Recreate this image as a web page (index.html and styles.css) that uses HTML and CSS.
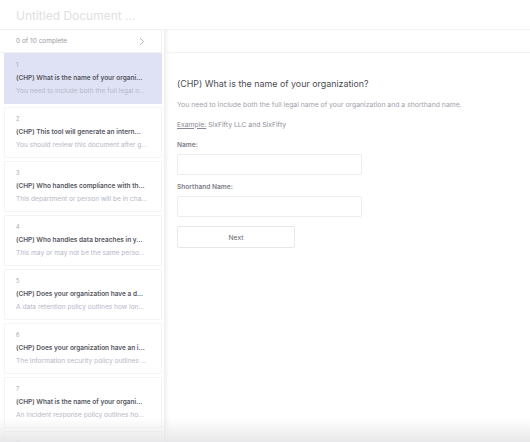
FILE: index.html
```html
<!DOCTYPE html>
<html>
<head>
<meta charset="utf-8">
<link rel="stylesheet" href="styles.css">
</head>
<body>
<div class="app">
  <header class="topbar"><span class="doc-title">Untitled Document ...</span></header>
  <div class="body">
    <aside class="sidebar">
      <div class="progress">
        <span>0 of 10 complete</span>
        <svg class="chev" width="6" height="9" viewBox="0 0 6 9"><path d="M1 1l3.5 3.5L1 8" fill="none" stroke="#bbb" stroke-width="1"/></svg>
      </div>
      <div class="items">
        <div class="item active"><div class="num">1</div><div class="q">(CHP) What is the name of your organi...</div><div class="d">You need to include both the full legal n...</div></div>
        <div class="item"><div class="num">2</div><div class="q">(CHP) This tool will generate an intern...</div><div class="d">You should review this document after g...</div></div>
        <div class="item"><div class="num">3</div><div class="q">(CHP) Who handles compliance with th...</div><div class="d">This department or person will be in cha...</div></div>
        <div class="item"><div class="num">4</div><div class="q">(CHP) Who handles data breaches in y...</div><div class="d">This may or may not be the same perso...</div></div>
        <div class="item"><div class="num">5</div><div class="q">(CHP) Does your organization have a d...</div><div class="d">A data retention policy outlines how lon...</div></div>
        <div class="item"><div class="num">6</div><div class="q">(CHP) Does your organization have an i...</div><div class="d">The information security policy outlines ...</div></div>
        <div class="item"><div class="num">7</div><div class="q">(CHP) What is the name of your organi...</div><div class="d">An incident response policy outlines ho...</div></div>
        <div class="item"><div class="num">8</div><div class="q">(CHP) Has your organization appointed ...</div><div class="d">A privacy officer is responsible for...</div></div>
      </div>
    </aside>
    <main class="main">
      <div class="main-top"></div>
      <section class="form">
        <h1 class="title">(CHP) What is the name of your organization?</h1>
        <p class="desc">You need to include both the full legal name of your organization and a shorthand name.</p>
        <p class="example"><u>Example:</u> SixFifty LLC and SixFifty</p>
        <label class="lbl">Name:</label>
        <div class="input"></div>
        <label class="lbl second">Shorthand Name:</label>
        <div class="input"></div>
        <button class="next">Next</button>
      </section>
    </main>
  </div>
  <div class="fade"></div>
</div>
</body>
</html>
```
FILE: styles.css
```css
* { box-sizing: border-box; }
html, body { margin: 0; padding: 0; }
body {
  width: 530px; height: 442px; overflow: hidden;
  font-family: Inter, "Noto Sans", sans-serif;
  background: #fff;
}
.app { position: relative; width: 530px; height: 442px; display: flex; flex-direction: column; overflow: hidden; }
.topbar {
  height: 30px; flex-shrink: 0; border-bottom: 1px solid #f1f1f1;
  display: flex; align-items: center; padding-left: 16px;
}
.doc-title { font-size: 12px; color: #e0e0e3; font-weight: 400; margin-top: 1px; }
.body { flex: 1; display: flex; min-height: 0; overflow: hidden; }
.sidebar { width: 165px; flex-shrink: 0; border-right: 1px solid #f0f0f0; display: flex; flex-direction: column; overflow: hidden; }
.progress {
  height: 23px; flex-shrink: 0; border-bottom: 1px solid #f0f0f0; border-right: 1px solid #f2f2f2;
  display: flex; align-items: center; justify-content: space-between;
  padding: 0 16px 0 16px; font-size: 6.5px; color: #9a9a9f;
  margin-right: 2px;
}
.chev { margin-top: 1px; }
.items { display: flex; flex-direction: column; padding: 0 2px 0 4px; gap: 3px; }
.item {
  height: 51px; flex-shrink: 0; border: 1px solid #f4f4f6; background: #fff;
  padding: 6px 10px 0 11px; border-radius: 1px;
}
.item:last-child { height: 20px; }
.item.active { background: #dfe2f5; border-color: #dfe2f5; }
.num { font-size: 5.5px; color: #a6a6ac; height: 9px; line-height: 9px; margin-top: 1px; }
.q { font-size: 6.5px; line-height: 9px; font-weight: 600; color: #55565e; margin-top: 4px; white-space: nowrap; }
.d { font-size: 6.6px; line-height: 9px; color: #b6b6c8; margin-top: 4px; white-space: nowrap; }
.main { flex: 1; display: flex; flex-direction: column; box-shadow: inset 4px 0 4px -3px #ececec; }
.main-top { height: 23px; flex-shrink: 0; border-bottom: 1px solid #f3f3f3; }
.form { padding: 25px 12px 0 12px; display: flex; flex-direction: column; align-items: flex-start; }
.title { font-size: 8.9px; line-height: 12px; font-weight: 400; color: #4c4c54; margin: 0 0 9.5px; }
.desc { font-size: 6.85px; line-height: 9px; color: #a2a2ac; margin: 0 0 11px; }
.example { font-size: 6.8px; line-height: 9px; color: #8e8e9a; margin: 0 0 12px; }
.example u { color: #8a8a98; }
.lbl { font-size: 6.6px; line-height: 9px; font-weight: 600; color: #7e7e88; margin-bottom: 4.5px; }
.lbl.second { margin-top: 7.5px; }
.input { width: 185px; height: 21px; border: 1px solid #ededf0; border-radius: 2px; }
.next {
  width: 118px; height: 22px; border: 1px solid #e8e8ec; border-radius: 2px; background: #fff;
  font-family: inherit; font-size: 6.8px; color: #66666f; margin-top: 9px; padding: 0;
}
.fade {
  position: absolute; left: 0; right: 0; bottom: 0; height: 24px;
  background: linear-gradient(to bottom, rgba(236,236,238,0), rgba(230,230,232,0.9));
  pointer-events: none;
}
```
